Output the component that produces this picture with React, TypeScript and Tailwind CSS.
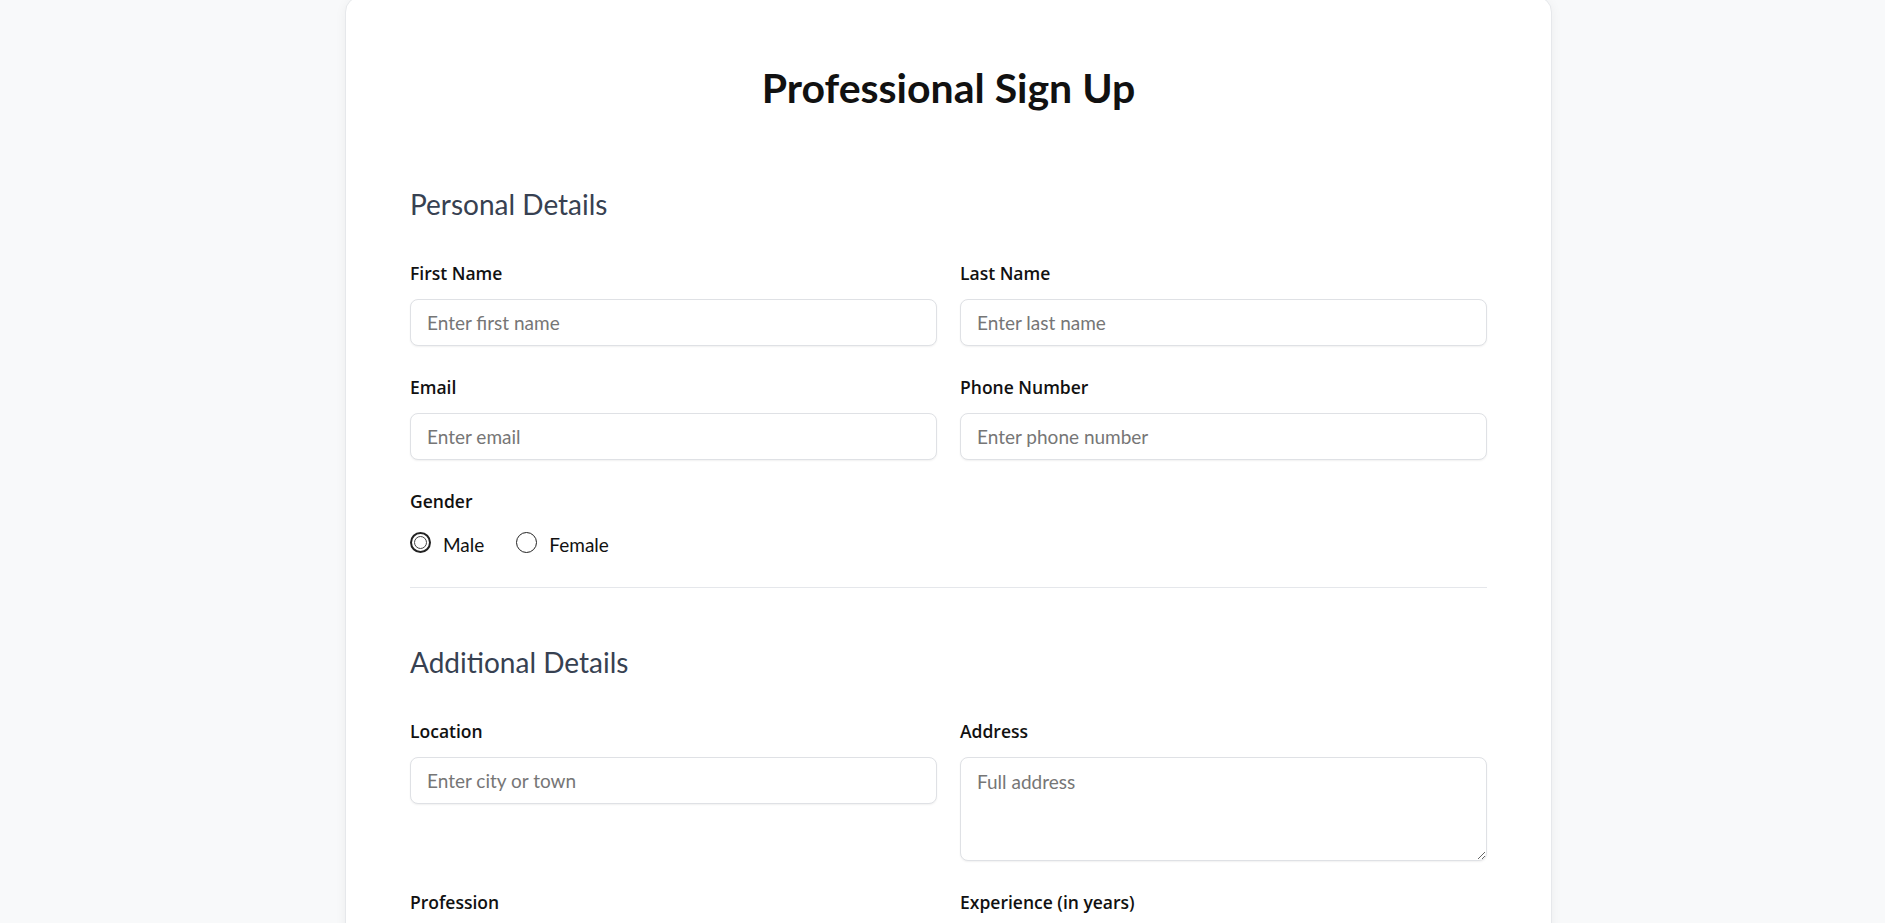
import { useState } from 'react';

const inputClass =
  "w-full h-[47px] px-4 rounded-lg border border-[#dfe1e5] bg-white text-[19px] text-black font-['Lato',sans-serif] shadow-[0_1px_2px_rgba(0,0,0,0.06)] outline-none placeholder:text-[#767676]";

function Field({ label, children }: { label: string; children: React.ReactNode }) {
  return (
    <div className="flex flex-col">
      <label className="text-[17.5px] leading-[26px] font-semibold text-[#111] mb-[13px]">{label}</label>
      {children}
    </div>
  );
}

function Radio({ checked, label, onClick }: { checked: boolean; label: string; onClick: () => void }) {
  return (
    <label className="flex items-center cursor-pointer" onClick={onClick}>
      <span
        className={`w-[21px] h-[21px] rounded-full bg-white flex items-center justify-center -mt-[5px] ${
          checked ? 'border-2 border-[#222]' : 'border border-[#222]'
        }`}
      >
        {checked && <span className="w-[13px] h-[13px] rounded-full border-[1.5px] border-[#444]" />}
      </span>
      <span className="ml-3 text-[19px] leading-[30px] text-[#111] font-['Lato',sans-serif]">{label}</span>
    </label>
  );
}

export default function App() {
  const [gender, setGender] = useState('male');

  return (
    <div
      className="min-h-screen bg-[#f8f9fa] flex justify-center pl-3"
      style={{ fontFamily: '"Open Sans", "Noto Sans", sans-serif' }}
    >
      <div className="w-[1207px] -mt-1 mb-10 bg-white rounded-2xl border border-[#e6e8eb] shadow-[0_2px_12px_rgba(0,0,0,0.05)] px-16 pt-[67px] pb-16">
        <h1 className="text-[41px] leading-[48px] font-bold font-['Lato',sans-serif] text-center text-[#111] mb-[74px]">
          Professional Sign Up
        </h1>

        {/* Personal details */}
        <section>
          <h2 className="text-[28px] leading-[36px] text-[#374151] font-['Lato',sans-serif] mb-[38px]">Personal Details</h2>
          <div className="grid grid-cols-2 gap-x-[23px] gap-y-7">
            <Field label="First Name">
              <input className={inputClass} placeholder="Enter first name" />
            </Field>
            <Field label="Last Name">
              <input className={inputClass} placeholder="Enter last name" />
            </Field>
            <Field label="Email">
              <input type="email" className={inputClass} placeholder="Enter email" />
            </Field>
            <Field label="Phone Number">
              <input type="tel" className={inputClass} placeholder="Enter phone number" />
            </Field>
            <div className="col-span-2 flex flex-col">
              <span className="text-[17.5px] leading-[26px] font-semibold text-[#111] mb-[16px]">Gender</span>
              <div className="flex items-center gap-x-8">
                <Radio checked={gender === 'male'} label="Male" onClick={() => setGender('male')} />
                <Radio checked={gender === 'female'} label="Female" onClick={() => setGender('female')} />
              </div>
            </div>
          </div>
        </section>

        <hr className="border-0 border-t border-[#e5e7eb] mt-[27px] mb-[56px]" />

        {/* Additional details */}
        <section>
          <h2 className="text-[28px] leading-[36px] text-[#374151] font-['Lato',sans-serif] mb-[38px]">Additional Details</h2>
          <div className="grid grid-cols-2 gap-x-[23px] gap-y-7 items-start">
            <Field label="Location">
              <input className={inputClass} placeholder="Enter city or town" />
            </Field>
            <Field label="Address">
              <textarea
                className="w-full h-[104px] px-4 py-3 rounded-lg border border-[#dfe1e5] bg-white text-[19px] leading-[24px] font-['Lato',sans-serif] shadow-[0_1px_2px_rgba(0,0,0,0.06)] outline-none placeholder:text-[#767676]"
                placeholder="Full address"
              />
            </Field>
            <Field label="Profession">
              <input className={inputClass} placeholder="e.g. Software Engineer" />
            </Field>
            <Field label="Experience (in years)">
              <input type="number" className={inputClass} placeholder="Enter years of experience" />
            </Field>
          </div>
        </section>

        <button className="mt-10 w-full h-[52px] rounded-lg bg-[#111] text-white text-[20px] font-semibold">
          Sign Up
        </button>
      </div>
    </div>
  );
}
